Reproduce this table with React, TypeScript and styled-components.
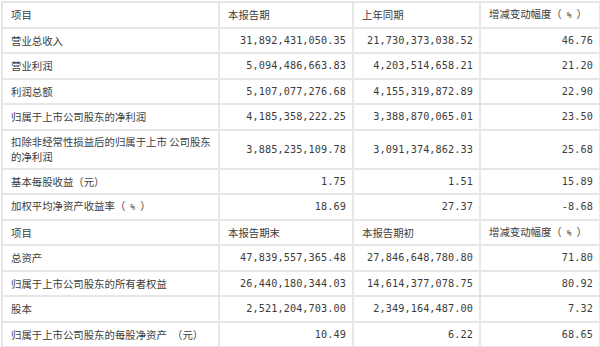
import React from "react";
import styled, { createGlobalStyle } from "styled-components";

const Global = createGlobalStyle`
  html, body { margin: 0; padding: 0; background: #ffffff; }
  body { font-family: "Noto Sans CJK SC", "Noto Sans", sans-serif; color: #3a3a3a; }
`;

const Wrap = styled.div`
  padding: 1px 1px 0 1px;
`;

const Table = styled.table`
  width: 598px;
  border-collapse: collapse;
  table-layout: fixed;
  border: 2px solid #e6e6e6;
`;

const Col = styled.col<{ $w: number }>`
  width: ${(p) => p.$w}px;
`;

const Row = styled.tr<{ $tall?: boolean }>`
  height: ${(p) => (p.$tall ? "39px" : "25.5px")};
`;

const Cell = styled.td`
  border: 2px solid #e6e6e6;
  padding: 0 7px 0 8px;
  font-size: 10.4px;
  line-height: 15px;
  vertical-align: middle;
  color: #3c3c3c;
`;

const LabelCell = styled(Cell)`
  font-family: "Noto Sans CJK SC", "Noto Sans", sans-serif;
  text-align: left;
`;

const HeadCell = styled(Cell)`
  font-family: "Noto Sans CJK SC", "Noto Sans", sans-serif;
  text-align: left;
`;

const NumCell = styled(Cell)`
  font-family: "DejaVu Sans Mono", "Liberation Mono", monospace;
  font-size: 10.2px;
  text-align: right;
  padding-right: 6px;
  letter-spacing: 0.1px;
`;

const Pct = styled.span`
  font-family: "DejaVu Sans Mono", monospace;
  font-size: 8px;
  margin: 0 5px;
`;

type R = { label: React.ReactNode; a: string; b: string; c: string; tall?: boolean };

const PctLabel = ({ prefix }: { prefix: string }) => (
  <>
    {prefix}（<Pct>%</Pct>）
  </>
);

const part1: R[] = [
  { label: "营业总收入", a: "31,892,431,050.35", b: "21,730,373,038.52", c: "46.76" },
  { label: "营业利润", a: "5,094,486,663.83", b: "4,203,514,658.21", c: "21.20" },
  { label: "利润总额", a: "5,107,077,276.68", b: "4,155,319,872.89", c: "22.90" },
  { label: "归属于上市公司股东的净利润", a: "4,185,358,222.25", b: "3,388,870,065.01", c: "23.50" },
  {
    label: "扣除非经常性损益后的归属于上市 公司股东的净利润",
    a: "3,885,235,109.78",
    b: "3,091,374,862.33",
    c: "25.68",
    tall: true,
  },
  { label: "基本每股收益（元）", a: "1.75", b: "1.51", c: "15.89" },
  { label: <PctLabel prefix="加权平均净资产收益率" />, a: "18.69", b: "27.37", c: "-8.68" },
];

const part2: R[] = [
  { label: "总资产", a: "47,839,557,365.48", b: "27,846,648,780.80", c: "71.80" },
  { label: "归属于上市公司股东的所有者权益", a: "26,440,180,344.03", b: "14,614,377,078.75", c: "80.92" },
  { label: "股本", a: "2,521,204,703.00", b: "2,349,164,487.00", c: "7.32" },
  { label: "归属于上市公司股东的每股净资产　（元）", a: "10.49", b: "6.22", c: "68.65" },
];

const Header = ({ cols }: { cols: React.ReactNode[] }) => (
  <Row>
    {cols.map((c, i) => (
      <HeadCell key={i}>{c}</HeadCell>
    ))}
  </Row>
);

const DataRow = ({ r }: { r: R }) => (
  <Row $tall={r.tall}>
    <LabelCell>{r.label}</LabelCell>
    <NumCell>{r.a}</NumCell>
    <NumCell>{r.b}</NumCell>
    <NumCell>{r.c}</NumCell>
  </Row>
);

export default function App() {
  return (
    <Wrap>
      <Global />
      <Table>
        <colgroup>
          <Col $w={217} />
          <Col $w={134} />
          <Col $w={127} />
          <Col $w={120} />
        </colgroup>
        <tbody>
          <Header cols={["项目", "本报告期", "上年同期", <PctLabel prefix="增减变动幅度" />]} />
          {part1.map((r, i) => (
            <DataRow key={i} r={r} />
          ))}
          <Header cols={["项目", "本报告期末", "本报告期初", <PctLabel prefix="增减变动幅度" />]} />
          {part2.map((r, i) => (
            <DataRow key={"b" + i} r={r} />
          ))}
        </tbody>
      </Table>
    </Wrap>
  );
}
